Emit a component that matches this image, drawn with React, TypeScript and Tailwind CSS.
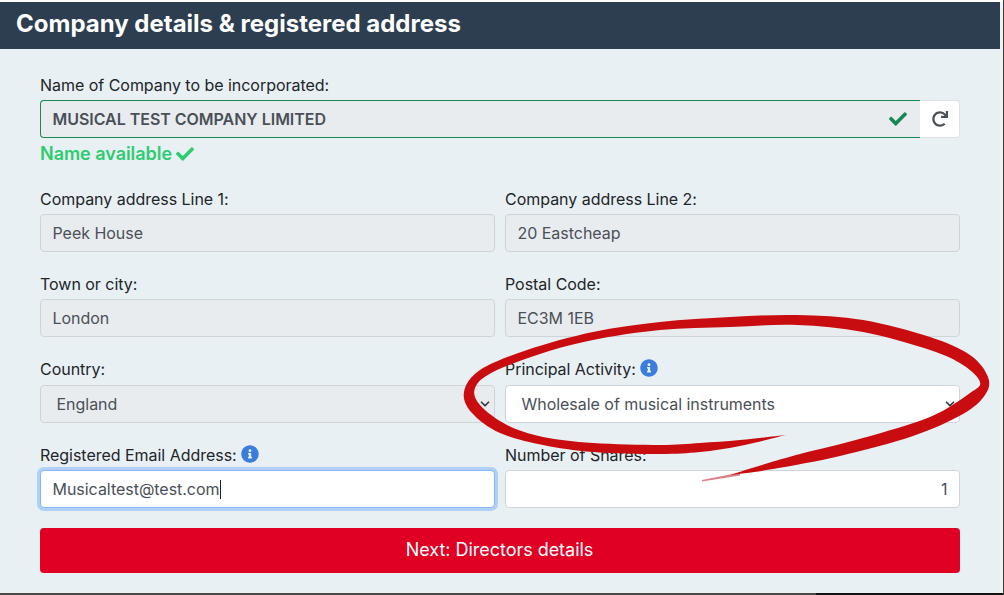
import { ChevronDown } from 'lucide-react';
import { FaCheck, FaInfoCircle, FaRedo } from 'react-icons/fa';

const outer = [[730, 475], [773, 469], [840, 456], [913, 436], [963, 414], [985, 395], [988, 377], [970, 355], [930, 337], [863, 320], [797, 315], [730, 317], [660, 322], [593, 332], [527, 350], [480, 370], [464, 392], [472, 413], [500, 433], [543, 445], [593, 452], [660, 454], [700, 452], [740, 446], [786, 435]];
const inner = [[786, 435], [740, 440], [700, 443], [660, 445], [593, 443], [543, 437], [507, 425], [480, 405], [475, 388], [493, 372], [543, 353], [593, 340], [660, 330], [730, 327], [797, 325], [863, 332], [930, 350], [963, 365], [980, 382], [970, 393], [930, 417], [863, 438], [800, 454], [765, 464], [730, 475]];

// smooth line through the points
const smooth = (pts: number[][]) => {
  let d = '';
  for (let i = 0; i < pts.length - 1; i++) {
    const p0 = pts[Math.max(i - 1, 0)];
    const p1 = pts[i];
    const p2 = pts[i + 1];
    const p3 = pts[Math.min(i + 2, pts.length - 1)];
    d += ` C${p1[0] + (p2[0] - p0[0]) / 6} ${p1[1] + (p2[1] - p0[1]) / 6} ${p2[0] - (p3[0] - p1[0]) / 6} ${p2[1] - (p3[1] - p1[1]) / 6} ${p2[0]} ${p2[1]}`;
  }
  return d;
};

const swoosh = `M730 475${smooth(outer)}${smooth(inner)}Z`;

function Label({ text, info, tall }: { text: string; info?: boolean; tall?: boolean }) {
  return (
    <div className={`flex items-center gap-[4px] h-[24px] text-[#212529] ${tall ? 'mb-[4px]' : 'mb-[3px]'}`}>
      <span>{text}</span>
      {info && <FaInfoCircle className="w-[18px] h-[18px] text-[#3b7ddd] -translate-y-px" />}
    </div>
  );
}

function Field({ label, value, info, select, white, right }: { label: string; value: string; info?: boolean; select?: boolean; white?: boolean; right?: boolean }) {
  return (
    <div className="flex-1 min-w-0">
      <Label text={label} info={info} tall={select} />
      <div className={`flex items-center justify-between h-[38px] rounded border border-[#ced4da] text-[#495057] ${white ? 'bg-white' : 'bg-[#e9ecef]'} ${select ? 'pl-[15.5px] pr-[2px]' : 'px-[11.5px]'} ${right ? 'justify-end' : ''}`}>
        <span>{value}</span>
        {select && <ChevronDown className="w-[14px] h-[14px] text-[#343a40]" strokeWidth={3} />}
      </div>
    </div>
  );
}

export default function App() {
  return (
    <div className="relative w-[1004px] h-[595px] overflow-hidden bg-[#f2f4f4] text-base tracking-[-0.03px] font-['Inter',sans-serif]">
      <div className="h-[2px] bg-white" />
      <div className="flex flex-col w-[1000px] h-[591px] bg-[#e9f0f3]">
        <h1 className="h-[47px] pl-4 pb-[4px] flex items-center bg-[#2c3e50] text-white text-2xl font-bold tracking-normal">Company details &amp; registered address</h1>
        <div className="flex flex-col pl-10 pr-10 pt-[24px]">
          <Label text="Name of Company to be incorporated:" />
          <div className="flex h-[38px]">
            <div className="flex-1 flex items-center justify-between pl-[11.5px] pr-[13px] rounded-l border border-r-0 border-[#198754] bg-[#e9ecef] font-semibold text-[#495057]">
              <span>MUSICAL TEST COMPANY LIMITED</span>
              <FaCheck className="w-[18px] h-[18px] text-[#198754]" />
            </div>
            <div className="w-[40px] flex items-center justify-center rounded-r border border-l-0 border-[#dee2e6] bg-white">
              <FaRedo className="w-[16px] h-[16px] text-[#495057]" />
            </div>
          </div>
          <div className="flex items-center gap-[4px] h-[24px] mt-[4px] mb-[-1px] text-lg font-semibold text-[#2ecc71]">
            <span>Name available</span>
            <FaCheck className="w-[18px] h-[18px]" />
          </div>
          <div className="flex flex-col gap-[20px] mt-[22px]">
            <div className="flex gap-[10px]">
              <Field label="Company address Line 1:" value="Peek House" />
              <Field label="Company address Line 2:" value="20 Eastcheap" />
            </div>
            <div className="flex gap-[10px]">
              <Field label="Town or city:" value="London" />
              <Field label="Postal Code:" value="EC3M 1EB" />
            </div>
            <div className="flex gap-[10px]">
              <Field label="Country:" value="England" select />
              <Field label="Principal Activity:" value="Wholesale of musical instruments" info select white />
            </div>
            <div className="flex gap-[10px]">
              <div className="flex-1 min-w-0">
                <Label text="Registered Email Address:" info />
                <div className="flex items-center h-[38px] px-[11.5px] rounded bg-white border border-[#86b7fe] ring-[3px] ring-[#0d6efd]/25 text-[#495057]">
                  <span>Musicaltest@test.com</span>
                  <span className="w-px h-[19px] bg-[#212529]" />
                </div>
              </div>
              <Field label="Number of Shares:" value="1" white right />
            </div>
          </div>
          <button className="h-[45px] mt-[20px] pb-[2px] pr-px rounded bg-[#e00024] text-white text-lg">Next: Directors details</button>
        </div>
      </div>
      <div className="flex h-[2px]">
        <div className="w-[816px] bg-[#4a4a4a]" />
        <div className="flex-1 bg-[#14100e]" />
      </div>
      <div className="absolute right-0 top-0 bottom-0 w-px bg-[#3a3a3a]" />
      <svg className="absolute inset-0 w-[1004px] h-[595px] blur-[0.6px] pointer-events-none" viewBox="0 0 1004 595">
        <path d="M702 480L740 472.5L740 475.5L702 481.5Z" fill="#dd7f86" />
        <path d={swoosh} fill="#c90c10" />
      </svg>
    </div>
  );
}
